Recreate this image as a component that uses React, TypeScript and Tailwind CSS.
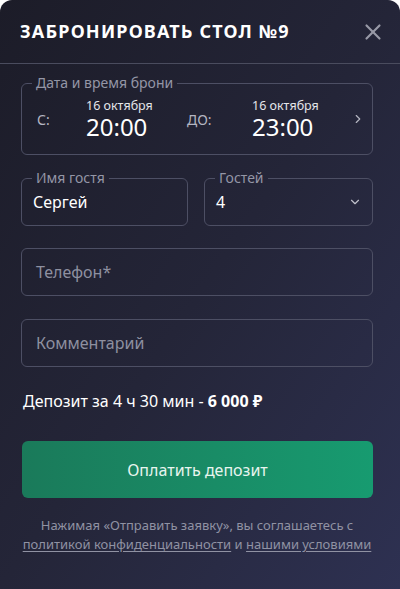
import React from 'react';
import { X, ChevronRight, ChevronDown } from 'lucide-react';

const font = { fontFamily: '"Noto Sans", "Open Sans", sans-serif' };

const Field = ({ label, children, className = '' }: { label?: string; children: React.ReactNode; className?: string }) => (
  <fieldset className={`border border-[#4d4f64] rounded-[6px] px-[10px] ${className}`}>
    {label && <legend className="px-1 text-[14px] leading-[16px] text-[#9496a6]">{label}</legend>}
    {children}
  </fieldset>
);

const App = () => {
  return (
    <div className="w-[400px] h-[589px] bg-white" style={font}>
      <div className="h-full rounded-t-[12px] bg-linear-to-br from-[#1c1c28] via-[#242538] to-[#2e3152] flex flex-col">
        <div className="h-[64px] flex items-center justify-between pl-5 pr-[14px] border-b border-[#4a4c5e]">
          <h2 className="text-white text-[18px] font-bold tracking-[0.065em]">ЗАБРОНИРОВАТЬ СТОЛ №9</h2>
          <X className="w-[26px] h-[26px] text-[#9899a6]" strokeWidth={2} />
        </div>

        <div className="pl-[21px] pr-[27px] pt-[11px] flex flex-col">
          <Field label="Дата и время брони" className="h-[80px]">
            <div className="flex items-center pt-[7px] pl-[5px] -mr-[3px]">
              <span className="text-[14px] text-[#b4b5c1] w-[49px]">С:</span>
              <div className="flex flex-col w-[101px]">
                <span className="text-[12.5px] leading-[16px] text-[#e4e5ea]">16 октября</span>
                <span className="text-[24px] leading-[26px] text-white">20:00</span>
              </div>
              <span className="text-[14px] text-[#b4b5c1] w-[65px]">ДО:</span>
              <div className="flex flex-col">
                <span className="text-[12.5px] leading-[16px] text-[#e4e5ea]">16 октября</span>
                <span className="text-[24px] leading-[26px] text-white">23:00</span>
              </div>
              <ChevronRight className="ml-auto w-[14px] h-[14px] text-[#b4b5c1]" strokeWidth={2} />
            </div>
          </Field>

          <div className="grid grid-cols-[167px_169px] gap-4 mt-[15px]">
            <Field label="Имя гостя" className="h-[56px]">
              <div className="text-[16px] text-white pl-[1px] leading-[32px]">Сергей</div>
            </Field>
            <Field label="Гостей" className="h-[56px]">
              <div className="flex items-center justify-between leading-[32px] pl-[1px]">
                <span className="text-[16px] text-white">4</span>
                <ChevronDown className="w-[14px] h-[14px] text-[#c0c1cb]" strokeWidth={2} />
              </div>
            </Field>
          </div>

          <div className="mt-[22px] h-[48px] border border-[#4d4f64] rounded-[6px] flex items-center px-[14px]">
            <span className="text-[16px] text-[#8e90a0]">Телефон*</span>
          </div>
          <div className="mt-[23px] h-[48px] border border-[#4d4f64] rounded-[6px] flex items-center px-[14px]">
            <span className="text-[16px] text-[#8e90a0]">Комментарий</span>
          </div>

          <p className="mt-[22px] text-[16px] text-white pl-[2px]">
            Депозит за 4 ч 30 мин - <span className="font-bold">6 000 ₽</span>
          </p>

          <button className="mt-[28px] ml-[1px] h-[57px] rounded-[6px] bg-linear-to-r from-[#1a7a5a] to-[#179b70] text-[16px] text-[#e8f5ef]">
            Оплатить депозит
          </button>

          <p className="mt-[18px] text-center text-[13px] leading-[19px] text-[#9092a3]">
            Нажимая «Отправить заявку», вы соглашаетесь с
            <br />
            <span className="underline underline-offset-2">политикой конфиденциальности</span> и{' '}
            <span className="underline underline-offset-2">нашими условиями</span>
          </p>
        </div>
      </div>
    </div>
  );
};

export default App;
